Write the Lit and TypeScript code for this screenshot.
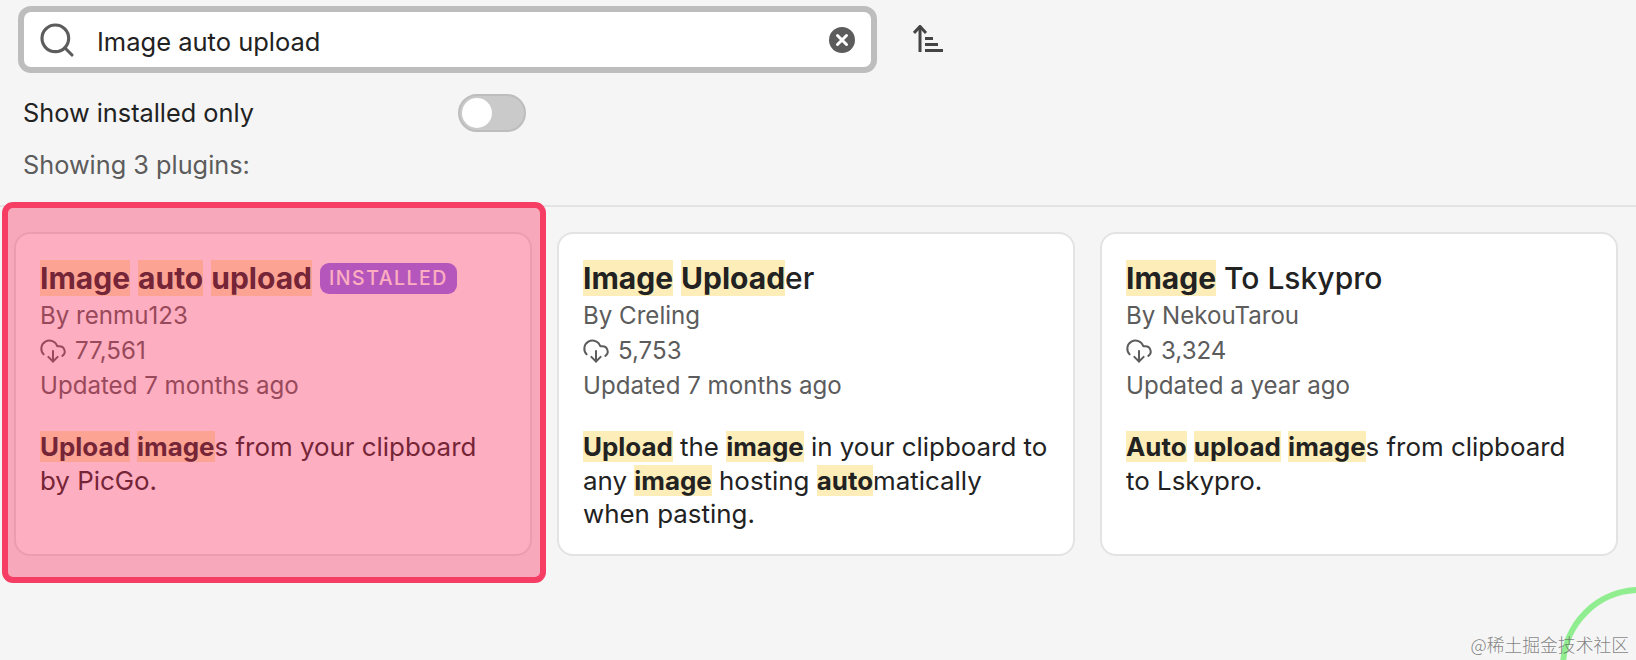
import { LitElement, html, css, svg } from "lit";
import { customElement } from "lit/decorators.js";

interface Plugin {
  title: unknown;
  badge?: boolean;
  author: string;
  downloads: string;
  updated: string;
  desc: unknown;
  selected?: boolean;
}

const PLUGINS: Plugin[] = [
  {
    title: html`<mark>Image</mark> <mark>auto</mark> <mark>upload</mark>`,
    badge: true,
    author: "By renmu123",
    downloads: "77,561",
    updated: "Updated 7 months ago",
    desc: html`<mark>Upload</mark> <mark>image</mark>s from your clipboard by PicGo.`,
    selected: true,
  },
  {
    title: html`<mark>Image</mark> <mark>Upload</mark>er`,
    author: "By Creling",
    downloads: "5,753",
    updated: "Updated 7 months ago",
    desc: html`<mark>Upload</mark> the <mark>image</mark> in your clipboard to any <mark>image</mark> hosting <mark>auto</mark>matically when pasting.`,
  },
  {
    title: html`<mark>Image</mark> To Lskypro`,
    author: "By NekouTarou",
    downloads: "3,324",
    updated: "Updated a year ago",
    desc: html`<mark>Auto</mark> <mark>upload</mark> <mark>image</mark>s from clipboard to Lskypro.`,
  },
];

const cloudIcon = svg`<path d="M4 14.899A7 7 0 1 1 15.71 8h1.79a4.5 4.5 0 0 1 2.5 8.242"/><path d="M12 12v9"/><path d="m8 17 4 4 4-4"/>`;

@customElement("app-root")
export class AppRoot extends LitElement {
  static styles = css`
    :host {
      display: block;
      position: relative;
      width: 1636px;
      height: 660px;
      overflow: hidden;
      background: #f5f5f5;
      color: #222222;
      font-family: Inter, "Noto Sans", sans-serif;
      font-size: 25.3px;
    }
    .header {
      display: flex;
      flex-direction: column;
      padding: 6px 0 0 18px;
      height: 205px;
      box-sizing: border-box;
    }
    .search-row {
      display: flex;
      align-items: center;
      gap: 36px;
    }
    .search {
      box-sizing: border-box;
      width: 859px;
      height: 67px;
      border: 6px solid #bdbdbd;
      border-radius: 13px;
      background: #ffffff;
      display: flex;
      align-items: center;
      padding: 0 16px 0 13px;
    }
    .search-icon {
      width: 40px;
      height: 40px;
      flex: none;
      fill: none;
      stroke: #5c5c5c;
      stroke-width: 1.9;
      stroke-linecap: round;
    }
    .search-text {
      flex: 1;
      margin: 4px 0 0 20px;
      font-size: 25.5px;
      line-height: 1;
    }
    .clear {
      width: 26px;
      height: 26px;
      flex: none;
    }
    .sort {
      width: 30px;
      height: 28px;
      flex: none;
      margin-top: -2px;
      fill: none;
      stroke: #444444;
      stroke-width: 3;
    }
    .toggle-row {
      display: flex;
      align-items: center;
      justify-content: space-between;
      width: 503px;
      margin: 21px 0 0 5px;
    }
    .toggle-row span {
      margin-top: -2px;
    }
    .toggle {
      box-sizing: border-box;
      width: 68px;
      height: 38px;
      border-radius: 19px;
      background: #cacaca;
      border: 2px solid #bdbdbd;
      padding: 2px;
    }
    .knob {
      width: 30px;
      height: 30px;
      border-radius: 50%;
      background: #ffffff;
    }
    .count {
      margin: 18px 0 0 5px;
      color: #5c5c5c;
      line-height: 30px;
    }
    .grid {
      display: grid;
      grid-template-columns: repeat(3, 518px);
      gap: 25px;
      padding: 25px 0 0 14px;
      border-top: 2px solid #e3e3e3;
    }
    .card {
      position: relative;
      box-sizing: border-box;
      height: 324px;
      background: #ffffff;
      border: 2px solid #e3e3e3;
      border-radius: 16px;
      padding: 25px 23px 0 24px;
    }
    .selection {
      position: absolute;
      left: -14px;
      right: -16px;
      top: -32px;
      bottom: -29px;
      border: 6px solid #f63d64;
      border-radius: 11px;
      background: rgba(250, 42, 90, 0.38);
    }
    .title {
      font-size: 30px;
      font-weight: 550;
      line-height: 39px;
      display: flex;
      align-items: center;
      gap: 8px;
    }
    mark {
      background: #fdeeb9;
      color: inherit;
    }
    .title mark {
      font-weight: 700;
    }
    .badge {
      background: #8c72f8;
      color: #ffffff;
      font-size: 19.5px;
      font-weight: 500;
      letter-spacing: 1.5px;
      line-height: 31px;
      height: 31px;
      padding: 0 9px;
      border-radius: 9px;
      margin-top: -1px;
    }
    .meta {
      color: #5c5c5c;
      font-size: 24.1px;
      line-height: 35px;
      display: flex;
      align-items: center;
    }
    .cloud {
      width: 28px;
      height: 28px;
      margin-right: 8px;
      margin-left: -1px;
      fill: none;
      stroke: #5c5c5c;
      stroke-width: 1.7;
      stroke-linecap: round;
      stroke-linejoin: round;
    }
    .desc {
      margin-top: 27px;
      font-size: 25.9px;
      line-height: 33.5px;
    }
    .desc mark {
      font-weight: 700;
    }
    .ring {
      position: absolute;
      left: 1560px;
      top: 587px;
      width: 160px;
      height: 160px;
      box-sizing: border-box;
      border: 6px solid #90ee90;
      border-radius: 50%;
    }
    .watermark {
      position: absolute;
      right: 7px;
      top: 632px;
      font-family: "Noto Sans CJK SC", sans-serif;
      font-size: 17.8px;
      font-weight: 300;
      line-height: 24px;
      color: rgba(100, 100, 100, 0.8);
    }
  `;

  private renderCard(p: Plugin) {
    return html`
      <div class="card">
        <div class="title">
          <span>${p.title}</span>
          ${p.badge ? html`<span class="badge">INSTALLED</span>` : null}
        </div>
        <div class="meta">${p.author}</div>
        <div class="meta">
          <svg class="cloud" viewBox="0 0 24 24">${cloudIcon}</svg>${p.downloads}
        </div>
        <div class="meta">${p.updated}</div>
        <div class="desc">${p.desc}</div>
        ${p.selected ? html`<div class="selection"></div>` : null}
      </div>
    `;
  }

  render() {
    return html`
      <div class="header">
        <div class="search-row">
          <div class="search">
            <svg class="search-icon" viewBox="0 0 24 24">
              <circle cx="11" cy="11" r="8"></circle>
              <path d="m21 21-4.35-4.35"></path>
            </svg>
            <div class="search-text">Image auto upload</div>
            <svg class="clear" viewBox="0 0 26 26">
              <circle cx="13" cy="13" r="13" fill="#5c5c5c"></circle>
              <path d="M8.5 8.5l9 9M17.5 8.5l-9 9" stroke="#fff" stroke-width="3" stroke-linecap="round"></path>
            </svg>
          </div>
          <svg class="sort" viewBox="0 0 30 28">
            <path d="M7 1v26"></path>
            <path d="M1 8l6-6.500 6 6.500"></path>
            <path d="M12 13.500h8M12 19.500h13M12 25.500h18"></path>
          </svg>
        </div>
        <div class="toggle-row">
          <span>Show installed only</span>
          <div class="toggle"><div class="knob"></div></div>
        </div>
        <div class="count">Showing 3 plugins:</div>
      </div>
      <div class="grid">${PLUGINS.map((p) => this.renderCard(p))}</div>
      <div class="ring"></div>
      <div class="watermark">@稀土掘金技术社区</div>
    `;
  }
}
